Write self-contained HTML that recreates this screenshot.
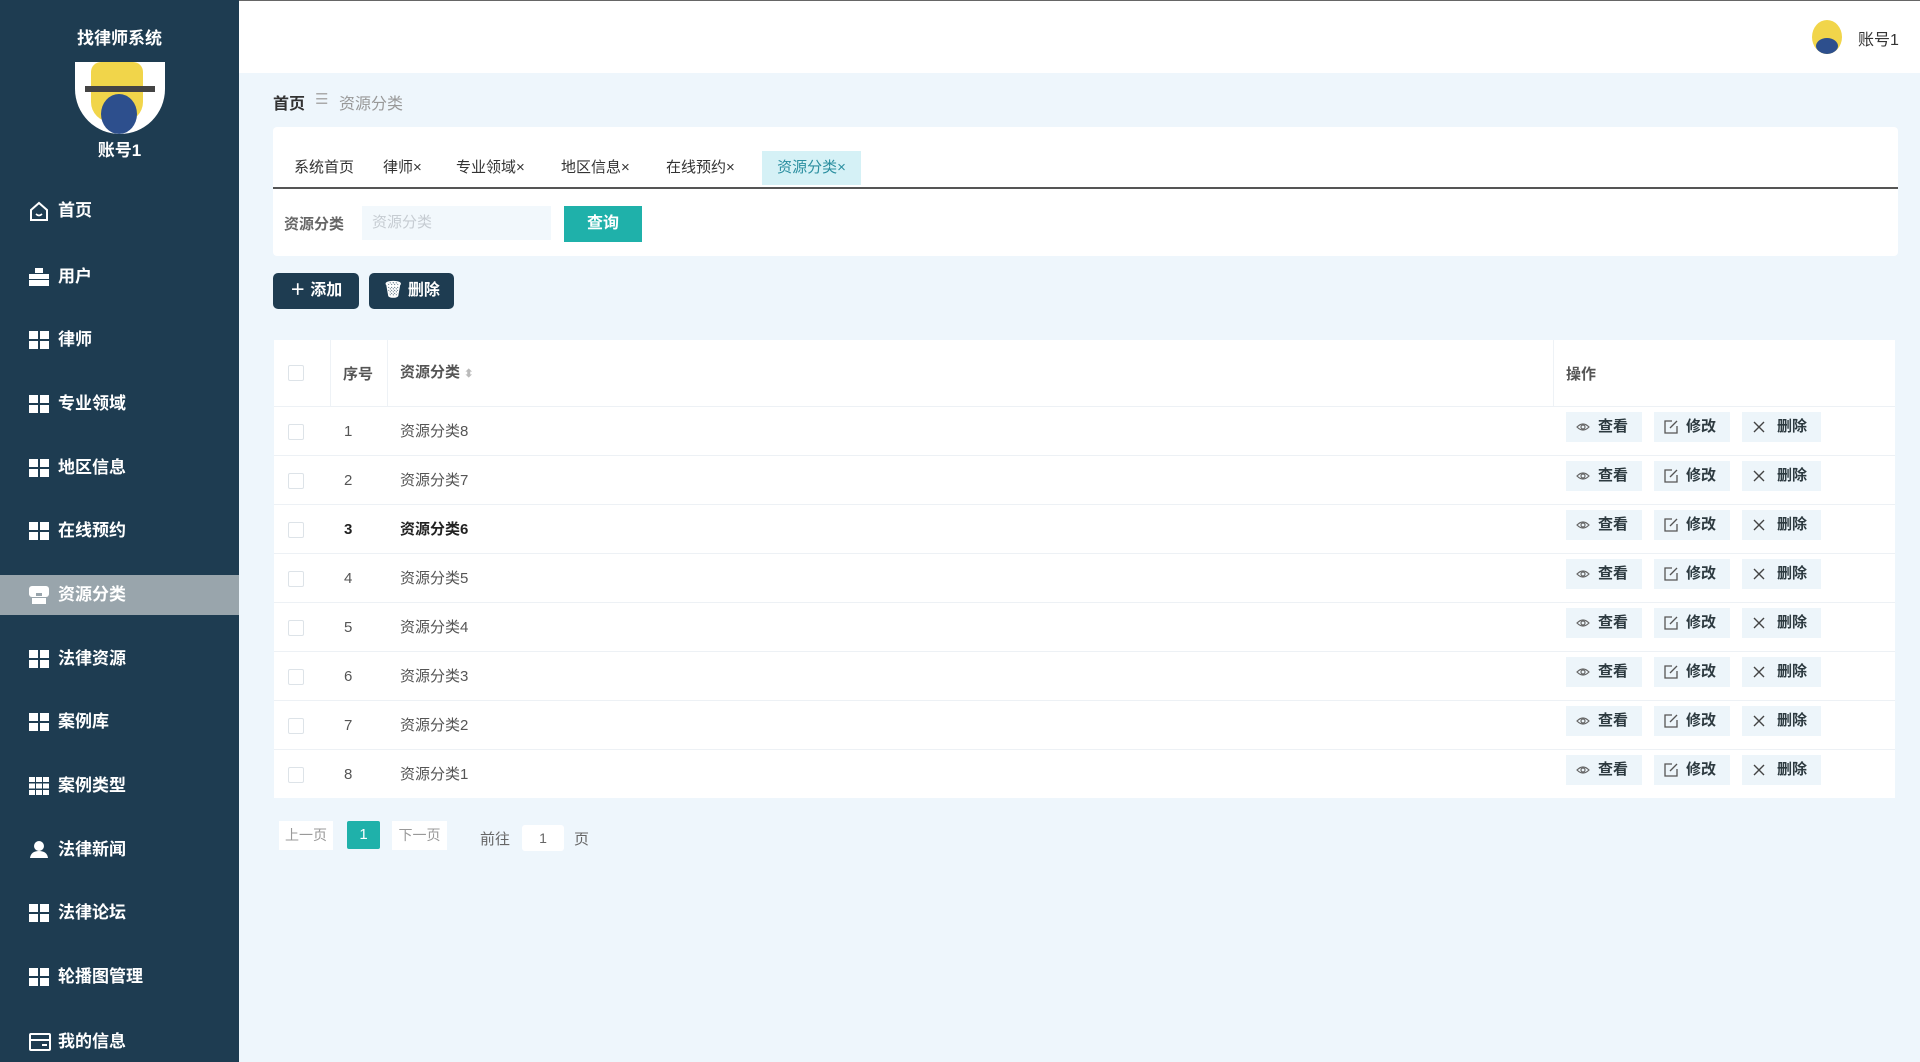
<!DOCTYPE html>
<html><head><meta charset="utf-8"><style>
*{margin:0;padding:0;box-sizing:border-box}
body{width:1920px;height:1062px;overflow:hidden;position:relative;background:#eef6fc;font-family:"Liberation Sans","Noto Sans CJK SC",sans-serif;color:#333}
.a{position:absolute}
#side{left:0;top:0;width:239px;height:1062px;background:#1e3c51}
.mi{position:absolute;left:0;width:239px;height:40px;color:#fff;font-size:17px;font-weight:bold;line-height:40px}
.mi .ic{position:absolute;left:29px;top:11px;width:20px;height:18px}
.mi span{position:absolute;left:58px}
.grid{background:
linear-gradient(#fff,#fff) 0 0/9px 8px no-repeat,
linear-gradient(#fff,#fff) 11px 0/9px 8px no-repeat,
linear-gradient(#fff,#fff) 0 10px/9px 8px no-repeat,
linear-gradient(#fff,#fff) 11px 10px/9px 8px no-repeat}
.tab{position:absolute;top:151px;height:34px;line-height:34px;font-size:15px;color:#333;padding:0 0px}
.th{font-weight:bold;font-size:15px;color:#555}
.row{position:absolute;left:274px;width:1621px;height:49px;background:#fff;border-top:1px solid #edf1f5}
.row div{position:absolute;top:0;line-height:48px;font-size:15px;color:#555}
.cb{position:absolute;left:288px;width:16px;height:16px;border:1px solid #dde3e8;border-radius:2px;background:#fff}
.ob{position:absolute;top:9px;height:30px;line-height:30px !important;width:76px;background:#edf5fa;font-size:15px;color:#2d3a40 !important;font-weight:bold;text-align:right;padding-right:14px}
.ob svg{position:absolute;left:10px;top:8px}
</style></head><body>
<div class="a" style="left:0;top:0;width:1920px;height:73px;background:#fff"></div>
<div class="a" style="left:0;top:0;width:1920px;height:1px;background:#666"></div>
<div id="side" class="a">
 <div class="a" style="left:0;top:24px;width:239px;text-align:center;color:#fff;font-weight:bold;font-size:17px">找律师系统</div>
 <div class="a" style="left:75px;top:62px;width:90px;height:72px;border-radius:0 0 45px 45px;background:#fff;overflow:hidden">
  <div class="a" style="left:16px;top:0;width:52px;height:60px;background:#f1d54a;border-radius:10px 10px 20px 20px"></div>
  <div class="a" style="left:26px;top:32px;width:36px;height:40px;background:#2d4f8d;border-radius:50%"></div>
  <div class="a" style="left:10px;top:24px;width:70px;height:6px;background:#444"></div>
 </div>
 <div class="a" style="left:0;top:136px;width:239px;text-align:center;color:#fff;font-weight:bold;font-size:17px">账号1</div>
 <div class="mi" style="top:191px"><svg class="ic" viewBox="0 0 20 20" style="top:9px;height:22px"><path d="M2 9 L10 2 L18 9 V19 H2 Z" fill="none" stroke="#fff" stroke-width="2"/><path d="M7 13 Q10 16 13 13" fill="none" stroke="#fff" stroke-width="1.6"/></svg><span>首页</span></div>
 <div class="mi" style="top:257px"><svg class="ic" viewBox="0 0 20 18"><rect x="6" y="0" width="8" height="5" fill="#fff"/><rect x="0" y="6" width="20" height="5" fill="#fff"/><rect x="0" y="12" width="20" height="6" fill="#fff"/></svg><span>用户</span></div>
 <div class="mi" style="top:320px"><div class="ic grid"></div><span>律师</span></div>
 <div class="mi" style="top:384px"><div class="ic grid"></div><span>专业领域</span></div>
 <div class="mi" style="top:448px"><div class="ic grid"></div><span>地区信息</span></div>
 <div class="mi" style="top:511px"><div class="ic grid"></div><span>在线预约</span></div>
 <div class="mi" style="top:575px;background:#99a5ac"><svg class="ic" viewBox="0 0 20 18"><rect x="0" y="0" width="20" height="11" rx="3" fill="#fff"/><rect x="3" y="12" width="14" height="6" fill="#fff"/><rect x="7" y="7" width="6" height="3" fill="#99a5ac"/></svg><span>资源分类</span></div>
 <div class="mi" style="top:639px"><div class="ic grid"></div><span>法律资源</span></div>
 <div class="mi" style="top:702px"><div class="ic grid"></div><span>案例库</span></div>
 <div class="mi" style="top:766px"><svg class="ic" viewBox="0 0 20 18"><g fill="#fff"><rect x="0" y="0" width="6" height="5"/><rect x="7" y="0" width="6" height="5"/><rect x="14" y="0" width="6" height="5"/><rect x="0" y="6.5" width="6" height="5"/><rect x="7" y="6.5" width="6" height="5"/><rect x="14" y="6.5" width="6" height="5"/><rect x="0" y="13" width="6" height="5"/><rect x="7" y="13" width="6" height="5"/><rect x="14" y="13" width="6" height="5"/></g></svg><span>案例类型</span></div>
 <div class="mi" style="top:830px"><svg class="ic" viewBox="0 0 20 18"><circle cx="10" cy="5" r="5" fill="#fff"/><path d="M1 17 Q2 10 10 10 Q18 10 19 17 Z" fill="#fff"/></svg><span>法律新闻</span></div>
 <div class="mi" style="top:893px"><div class="ic grid"></div><span>法律论坛</span></div>
 <div class="mi" style="top:957px"><div class="ic grid"></div><span>轮播图管理</span></div>
 <div class="mi" style="top:1022px"><svg class="ic" viewBox="0 0 22 18" style="width:22px"><rect x="1" y="1" width="20" height="16" rx="1" fill="none" stroke="#fff" stroke-width="2"/><rect x="1" y="6" width="20" height="2" fill="#fff"/><rect x="13" y="11" width="5" height="2" fill="#fff"/></svg><span>我的信息</span></div>
</div>
<div class="a" style="left:1812px;top:20px;width:30px;height:34px;border-radius:50%;background:#f1d54a;overflow:hidden"><div class="a" style="left:4px;top:18px;width:22px;height:16px;background:#2d4f8d;border-radius:50%"></div></div>
<div class="a" style="left:1858px;top:26px;font-size:16px;color:#333">账号1</div>
<div class="a" style="left:273px;top:90px;font-size:16px;font-weight:bold;color:#333">首页</div>
<div class="a" style="left:315px;top:90px;font-size:15px;color:#aaa">☰</div>
<div class="a" style="left:339px;top:90px;font-size:16px;color:#999">资源分类</div>
<div class="a" style="left:273px;top:127px;width:1625px;height:129px;background:#fff;border-radius:4px"></div>
<div class="a" style="left:273px;top:187px;width:1625px;height:2px;background:#555"></div>
<div class="tab" style="left:294px">系统首页</div>
<div class="tab" style="left:383px">律师×</div>
<div class="tab" style="left:456px">专业领域×</div>
<div class="tab" style="left:561px">地区信息×</div>
<div class="tab" style="left:666px">在线预约×</div>
<div class="tab" style="left:762px;width:99px;background:#d5f1f6;color:#2b8fa0;text-align:center">资源分类×</div>
<div class="a" style="left:284px;top:213px;font-size:15px;font-weight:bold;color:#666">资源分类</div>
<div class="a" style="left:362px;top:206px;width:189px;height:34px;background:#f2f8fc;color:#c6ccd2;font-size:15px;line-height:34px;padding-left:10px">资源分类</div>
<div class="a" style="left:564px;top:206px;width:78px;height:36px;background:#1fb1aa;color:#fff;font-size:16px;font-weight:bold;line-height:36px;text-align:center">查询</div>
<div class="a" style="left:273px;top:273px;width:86px;height:36px;background:#1e3c51;border-radius:5px;color:#fff;font-size:16px;font-weight:bold;line-height:36px;text-align:center">＋ 添加</div>
<div class="a" style="left:369px;top:273px;width:85px;height:36px;background:#1e3c51;border-radius:5px;color:#fff;font-size:16px;font-weight:bold;line-height:36px;text-align:center">🗑 删除</div>
<div class="a" style="left:274px;top:340px;width:1621px;height:66px;background:#fff"></div>
<div class="a" style="left:330px;top:340px;width:1px;height:457px;background:#eef2f6"></div>
<div class="a" style="left:387px;top:340px;width:1px;height:457px;background:#eef2f6"></div>
<div class="a" style="left:1553px;top:340px;width:1px;height:457px;background:#eef2f6"></div>
<div class="cb" style="top:365px"></div>
<div class="a th" style="left:343px;top:363px">序号</div>
<div class="a th" style="left:400px;top:361px">资源分类 <span style="color:#bbb;font-size:11px">⬍</span></div>
<div class="a th" style="left:1566px;top:363px">操作</div>
<div id="rows"></div>
<script>
var h='';var tops=[406,455,504,553,602,651,700,749];
var eye='<svg width="14" height="14" viewBox="0 0 14 14"><path d="M1 7 Q7 1 13 7 Q7 13 1 7Z" fill="none" stroke="#666" stroke-width="1.2"/><circle cx="7" cy="7" r="2" fill="none" stroke="#666" stroke-width="1.2"/></svg>';
var ed='<svg width="14" height="14" viewBox="0 0 14 14"><path d="M8 1H1V13H13V6" fill="none" stroke="#555" stroke-width="1.3"/><path d="M6 8 L13 1" stroke="#555" stroke-width="1.3"/></svg>';
var x='<svg width="14" height="14" viewBox="0 0 14 14"><path d="M2 2L12 12M12 2L2 12" stroke="#444" stroke-width="1.4"/></svg>';
for(var i=0;i<8;i++){var b=i==2?'font-weight:bold;color:#222;':'';
h+='<div class="row" style="top:'+tops[i]+'px"><span class="cb" style="left:14px;top:17px;position:absolute"></span><div style="left:70px;top:1px;'+b+'">'+(i+1)+'</div><div style="left:126px;top:1px;'+b+'">资源分类'+(8-i)+'</div>'+
'<div class="ob" style="left:1292px;top:5px">'+eye+'查看</div><div class="ob" style="left:1380px;top:5px">'+ed+'修改</div><div class="ob" style="left:1468px;top:5px;width:79px">'+x+'删除</div></div>';}
document.getElementById('rows').innerHTML=h;
</script>
<div class="a" style="left:279px;top:821px;width:54px;height:29px;background:#fff;color:#999;font-size:14px;line-height:29px;text-align:center">上一页</div>
<div class="a" style="left:347px;top:821px;width:33px;height:28px;background:#1fb1aa;border-radius:2px;color:#fff;font-size:15px;line-height:28px;text-align:center">1</div>
<div class="a" style="left:392px;top:821px;width:55px;height:29px;background:#fff;color:#999;font-size:14px;line-height:29px;text-align:center">下一页</div>
<div class="a" style="left:480px;top:828px;font-size:15px;color:#666">前往</div>
<div class="a" style="left:522px;top:825px;width:42px;height:26px;background:#fff;border-radius:3px;color:#666;font-size:14px;line-height:26px;text-align:center">1</div>
<div class="a" style="left:574px;top:828px;font-size:15px;color:#666">页</div>
</body></html>
